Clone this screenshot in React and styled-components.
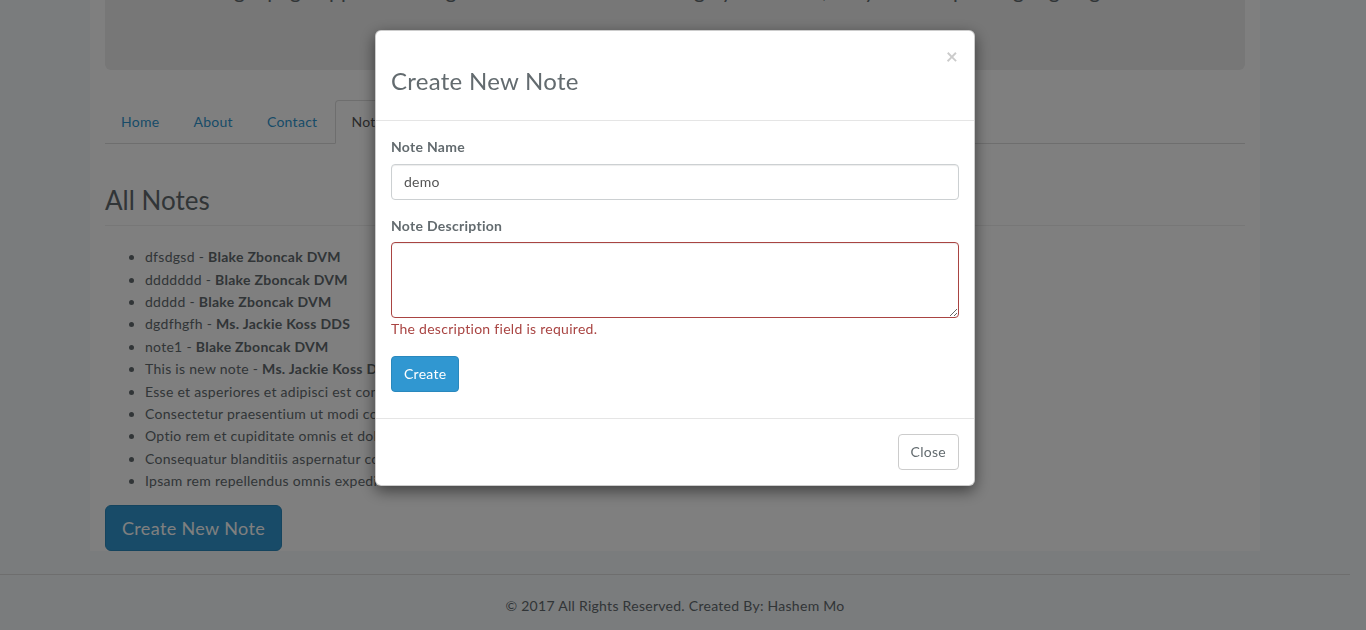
import React from 'react'
import styled, { createGlobalStyle } from 'styled-components'

//STYLES
const brand = '#3097d1'
const text = '#636b6f'
const font = "Lato, 'Open Sans', sans-serif"

const Global = createGlobalStyle`
  html, body {
    margin: 0;
    height: 100%;
  }
  body {
    background: #f5f8fa;
    font-family: ${font};
    font-size: 14px;
    line-height: 1.6;
    letter-spacing: 0.02em;
    color: ${text};
    padding-right: 16px;
    overflow: hidden;
  }
  * { box-sizing: border-box; }
`

const Container = styled.div`
  width: 1170px;
  margin: 0 auto;
  padding: 0 15px;
  background: #fff;
`
const Jumbotron = styled.div`
  margin-top: -75px;
  margin-bottom: 30px;
  padding: 48px 60px;
  background: #eee;
  border-radius: 6px;
`
const JumboText = styled.p`
  margin: 0 0 15px;
  font-size: 21px;
  line-height: 33.6px;
  padding-left: 40px;
`
const Tabs = styled.ul`
  display: flex;
  list-style: none;
  margin: 0;
  padding: 0;
  border-bottom: 1px solid #ddd;
`
const Tab = styled.li`
  margin-bottom: -1px;
  margin-right: 2px;
  a {
    display: block;
    padding: 10px 15px;
    line-height: 22.4px;
    border: 1px solid ${p => (p.$active ? '#ddd' : 'transparent')};
    border-bottom-color: transparent;
    border-radius: 4px 4px 0 0;
    background: ${p => (p.$active ? '#fff' : 'transparent')};
    color: ${p => (p.$active ? '#555' : brand)};
    text-decoration: none;
  }
`
const PageHeader = styled.div`
  margin: 41px 0 20px;
  padding-bottom: 9px;
  border-bottom: 1px solid #eee;
`
const Heading = styled.h2`
  margin: 0;
  font-size: 26px;
  font-weight: 400;
  line-height: 31.2px;
  letter-spacing: 0;
`
const NoteList = styled.ul`
  margin: 0 0 12px;
  padding-left: 40px;
  li { line-height: 22.4px; }
  strong { font-weight: 700; }
`
const Button = styled.button`
  display: inline-block;
  font-family: ${font};
  font-size: ${p => (p.$lg ? '18px' : '14px')};
  letter-spacing: 0.02em;
  line-height: ${p => (p.$lg ? '24px' : '22.4px')};
  padding: ${p => (p.$lg ? '10px 16px' : '6px 12px')};
  border-radius: ${p => (p.$lg ? '6px' : '4px')};
  border: 1px solid ${p => (p.$primary ? '#2a88bd' : '#ccc')};
  background: ${p => (p.$primary ? brand : '#fff')};
  color: ${p => (p.$primary ? '#fff' : text)};
  cursor: pointer;
`
const Footer = styled.footer`
  margin-top: 23px;
  border-top: 1px solid #ddd;
  padding: 20px 0;
  text-align: center;
  line-height: 22.4px;
`

//-Modal
const Backdrop = styled.div`
  position: fixed;
  inset: 0;
  background: rgba(0, 0, 0, 0.5);
`
const ModalWrap = styled.div`
  position: fixed;
  inset: 0;
  padding-right: 16px;
`
const Dialog = styled.div`
  width: 600px;
  margin: 30px auto;
  background: #fff;
  border: 1px solid rgba(0, 0, 0, 0.2);
  border-radius: 6px;
  box-shadow: 0 5px 15px rgba(0, 0, 0, 0.5);
`
const ModalHeader = styled.div`
  display: flex;
  justify-content: space-between;
  align-items: flex-start;
  padding: 15px;
  border-bottom: 1px solid #e5e5e5;
`
const ModalTitle = styled.h3`
  margin: 21px 0 11px;
  font-size: 24px;
  font-weight: 400;
  line-height: 27.4px;
`
const CloseX = styled.button`
  padding: 0;
  margin: -1px 1px 0 0;
  border: 0;
  background: none;
  font-family: ${font};
  font-size: 21px;
  font-weight: 700;
  line-height: 1;
  color: #000;
  opacity: 0.2;
`
const ModalBody = styled.div`
  padding: 15px 15px 26px;
`
const FormGroup = styled.div`
  margin-bottom: 15px;
`
const Label = styled.label`
  display: block;
  margin-bottom: 5px;
  font-weight: 700;
  line-height: 22.4px;
`
const Input = styled.input`
  display: block;
  width: 100%;
  height: 36px;
  padding: 6px 12px;
  font-family: ${font};
  font-size: 14px;
  letter-spacing: 0.02em;
  color: #555;
  border: 1px solid #ccd0d2;
  border-radius: 4px;
  box-shadow: inset 0 1px 1px rgba(0, 0, 0, 0.075);
  outline: none;
`
const TextArea = styled.textarea`
  display: block;
  width: 100%;
  height: 76px;
  padding: 6px 12px;
  font-family: ${font};
  font-size: 14px;
  border: 1px solid #a94442;
  border-radius: 4px;
  box-shadow: inset 0 1px 1px rgba(0, 0, 0, 0.075);
  outline: none;
`
const HelpBlock = styled.span`
  display: block;
  color: #a94442;
  line-height: 22.4px;
`
const ModalFooter = styled.div`
  padding: 15px;
  text-align: right;
  border-top: 1px solid #e5e5e5;
`

const notes = [
  ['dfsdgsd', 'Blake Zboncak DVM'],
  ['ddddddd', 'Blake Zboncak DVM'],
  ['ddddd', 'Blake Zboncak DVM'],
  ['dgdfhgfh', 'Ms. Jackie Koss DDS'],
  ['note1', 'Blake Zboncak DVM'],
  ['This is new note', 'Ms. Jackie Koss DDS'],
  ['Esse et asperiores et adipisci est consequatur.', 'Blake Zboncak DVM'],
  ['Consectetur praesentium ut modi corporis.', 'Ms. Jackie Koss DDS'],
  ['Optio rem et cupiditate omnis et dolores.', 'Blake Zboncak DVM'],
  ['Consequatur blanditiis aspernatur commodi.', 'Blake Zboncak DVM'],
  ['Ipsam rem repellendus omnis expedita.', 'Ms. Jackie Koss DDS'],
]

//MAIN COMPONENT
export default function App() {
  return (
    <>
      <Global />
      <Container>
        <Jumbotron>
          <JumboText>
            Single page app built using Laravel and Vue to manage your notes, easy and simple to get going
          </JumboText>
        </Jumbotron>
        <Tabs>
          <Tab><a href="#">Home</a></Tab>
          <Tab><a href="#">About</a></Tab>
          <Tab><a href="#">Contact</a></Tab>
          <Tab $active><a href="#">Notes</a></Tab>
        </Tabs>
        <PageHeader>
          <Heading>All Notes</Heading>
        </PageHeader>
        <NoteList>
          {notes.map(([name, author], i) => (
            <li key={i}>
              {name} - <strong>{author}</strong>
            </li>
          ))}
        </NoteList>
        <Button $primary $lg>Create New Note</Button>
      </Container>
      <Footer>© 2017 All Rights Reserved. Created By: Hashem Mo</Footer>

      <Backdrop />
      <ModalWrap>
        <Dialog>
          <ModalHeader>
            <ModalTitle>Create New Note</ModalTitle>
            <CloseX>×</CloseX>
          </ModalHeader>
          <ModalBody>
            <FormGroup>
              <Label>Note Name</Label>
              <Input defaultValue="demo" />
            </FormGroup>
            <FormGroup>
              <Label>Note Description</Label>
              <TextArea />
              <HelpBlock>The description field is required.</HelpBlock>
            </FormGroup>
            <Button $primary>Create</Button>
          </ModalBody>
          <ModalFooter>
            <Button>Close</Button>
          </ModalFooter>
        </Dialog>
      </ModalWrap>
    </>
  )
}
